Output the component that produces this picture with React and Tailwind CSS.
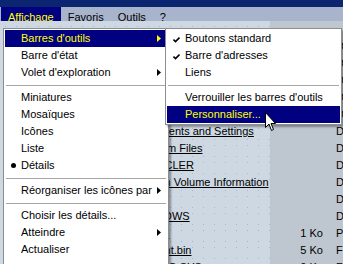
import React from 'react';

const files = [
  { name: '', size: '', type: '' },
  { name: '', size: '', type: 'D' },
  { name: '', size: '', type: 'D' },
  { name: '', size: '', type: 'D' },
  { name: '', size: '', type: 'D' },
  { name: '', size: '', type: 'D' },
  { name: 'Documents and Settings', size: '', type: 'Dossier de fichiers' },
  { name: 'Program Files', size: '', type: 'Dossier de fichiers' },
  { name: 'RECYCLER', size: '', type: 'Dossier de fichiers' },
  { name: 'System Volume Information', size: '', type: 'Dossier de fichiers' },
  { name: 'temp', size: '', type: 'Dossier de fichiers' },
  { name: 'WINDOWS', size: '', type: 'Dossier de fichiers' },
  { name: 'boot.ini', size: '1 Ko', type: 'Paramètres de configuration' },
  { name: 'bootfont.bin', size: '5 Ko', type: 'Fichier BIN' },
  { name: 'CONFIG.SYS', size: '0 Ko', type: 'Fichier système' },
];

const Arrow = ({ color }) => (
  <svg width="4" height="7" viewBox="0 0 4 7" className="shrink-0">
    <path d="M0 0 L4 3.5 L0 7 Z" fill={color} />
  </svg>
);

const Check = () => (
  <svg width="7" height="7" viewBox="0 0 7 7" className="absolute left-[6px] top-[6px]">
    <path d="M0.5 3.5 L2.5 5.5 L6.5 1.5" stroke="#000" strokeWidth="1.6" fill="none" />
  </svg>
);

const Item = ({ label, active, arrow, check, bullet, pl = 'pl-[16px]' }) => (
  <div
    className={`relative h-[17px] flex items-center justify-between ${pl} pr-[6px] ${
      active ? 'bg-[#000080] text-[#ffff00]' : 'text-black'
    }`}
  >
    {check && <Check />}
    {bullet && <span className="absolute left-[6px] top-[6px] w-[5px] h-[5px] rounded-full bg-black" />}
    <span className="whitespace-nowrap">{label}</span>
    {arrow && <Arrow color={active ? '#ffff00' : '#000'} />}
  </div>
);

const Sep = () => (
  <div className="h-[8px] flex items-center px-[1px]">
    <div className="w-full h-px bg-[#a6a6a6]" />
  </div>
);

export default function App() {
  return (
    <div className="relative w-[343px] h-[264px] overflow-hidden bg-[#cdd8e2] font-['Liberation_Sans',sans-serif] text-[11px] leading-none">
      {/* title bar */}
      <div className="h-[7px] bg-[#0c2570]" />

      {/* menu bar */}
      <div className="h-[21px] bg-[#a8b4cc] flex items-stretch pl-[1px]">
        <div className="px-[7px] flex items-center bg-[#000080] text-[#ffff00]">Affichage</div>
        <div className="px-[7px] flex items-center">Favoris</div>
        <div className="px-[7px] flex items-center">Outils</div>
        <div className="px-[7px] flex items-center">?</div>
      </div>

      {/* file list */}
      <div className="flex flex-col -mt-[7px]">
        {files.map((f, i) => (
          <div key={i} className="flex h-[17px] shrink-0">
            <div className="w-[270px] pl-[134px] flex items-center bg-[#cdd8e2] bg-[radial-gradient(#aab8c6_0.6px,transparent_0.9px)] bg-[size:11px_11px]">
              <span className="underline whitespace-nowrap">{f.name}</span>
            </div>
            <div className="w-[56px] flex items-center justify-end pr-[3px] bg-[#bec7d0]">{f.size}</div>
            <div className="flex-1 flex items-center pl-[10px] bg-[#bec7d0] whitespace-nowrap overflow-hidden">{f.type}</div>
          </div>
        ))}
      </div>

      {/* Affichage dropdown */}
      <div className="absolute left-[3px] top-[28px] w-[166px] h-[240px] bg-white border border-[#8d8d8d] p-[1px] shadow-[2px_2px_2px_rgba(0,0,0,0.35)]">
        <Item label="Barres d'outils" active arrow />
        <Item label="Barre d'état" />
        <Item label="Volet d'exploration" arrow />
        <Sep />
        <Item label="Miniatures" />
        <Item label="Mosaïques" />
        <Item label="Icônes" />
        <Item label="Liste" />
        <Item label="Détails" bullet />
        <Sep />
        <Item label="Réorganiser les icônes par" arrow />
        <Sep />
        <Item label="Choisir les détails..." />
        <Item label="Atteindre" arrow />
        <Item label="Actualiser" />
      </div>

      {/* Barres d'outils submenu */}
      <div className="absolute left-[165px] top-[28px] w-[177px] bg-white border border-[#8d8d8d] p-[1px] shadow-[2px_2px_2px_rgba(0,0,0,0.35)]">
        <Item label="Boutons standard" check pl="pl-[18px]" />
        <Item label="Barre d'adresses" check pl="pl-[18px]" />
        <Item label="Liens" pl="pl-[18px]" />
        <Sep />
        <Item label="Verrouiller les barres d'outils" pl="pl-[18px]" />
        <Item label="Personnaliser..." active pl="pl-[18px]" />
      </div>

      {/* mouse cursor */}
      <svg width="12" height="20" viewBox="0 0 12 20" className="absolute left-[265px] top-[112px]">
        <path d="M0.5 0.5 L0.5 15.5 L4 12 L6.5 18.5 L8.5 17.5 L6 11.5 L10.5 11.5 Z" fill="#fff" stroke="#000" strokeWidth="1" />
      </svg>
    </div>
  );
}
